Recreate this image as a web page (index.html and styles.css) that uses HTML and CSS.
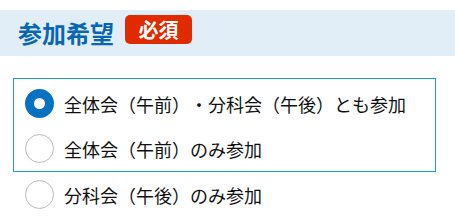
FILE: index.html
```html
<!DOCTYPE html>
<html lang="ja">
<head>
  <meta charset="UTF-8">
  <title>参加希望</title>
  <link rel="stylesheet" href="styles.css">
</head>
<body>
  <div class="section-head">
    <h2 class="section-title">参加希望</h2>
    <span class="required">必須</span>
  </div>

  <div class="options">
    <div class="option-box">
      <label class="option">
        <span class="radio checked"></span>
        <span class="option-text">全体会（午前）・分科会（午後）とも参加</span>
      </label>
      <label class="option">
        <span class="radio"></span>
        <span class="option-text">全体会（午前）のみ参加</span>
      </label>
    </div>
    <label class="option outside">
      <span class="radio"></span>
      <span class="option-text">分科会（午後）のみ参加</span>
    </label>
  </div>
</body>
</html>
```

FILE: styles.css
```css
body {
  margin: 0;
  font-family: "Noto Sans CJK JP", "Noto Sans", sans-serif;
  color: #111;
  background: #fff;
  text-spacing-trim: space-all;
}

.section-head {
  display: flex;
  align-items: center;
  gap: 11px;
  height: 46px;
  margin-top: 10px;
  padding-left: 18px;
  background: #e1eef8;
}

.section-title {
  margin: 0;
  font-size: 24px;
  font-weight: bold;
  line-height: 1;
  color: #0866b4;
}

.required {
  display: flex;
  align-items: center;
  justify-content: center;
  width: 67px;
  height: 29px;
  margin-bottom: 7px;
  border-radius: 5px;
  background: #e02a00;
  color: #fff;
  font-size: 20px;
  font-weight: bold;
  line-height: 1;
}

.options {
  margin-top: 22px;
}

.option-box {
  margin: 0 19px 0 13px;
  padding-top: 2px;
  border: 1px solid #1e9ad6;
}

.option {
  display: flex;
  align-items: center;
  gap: 10px;
  height: 45px;
  padding-left: 11px;
  font-size: 18px;
  cursor: pointer;
}

.option.outside {
  padding-left: 25px;
}

.radio {
  box-sizing: border-box;
  width: 29px;
  height: 29px;
  border: 1.5px solid #bbb;
  border-radius: 50%;
  background: #fff;
  flex-shrink: 0;
}

.radio.checked {
  border: 9px solid #0872c2;
}
```
